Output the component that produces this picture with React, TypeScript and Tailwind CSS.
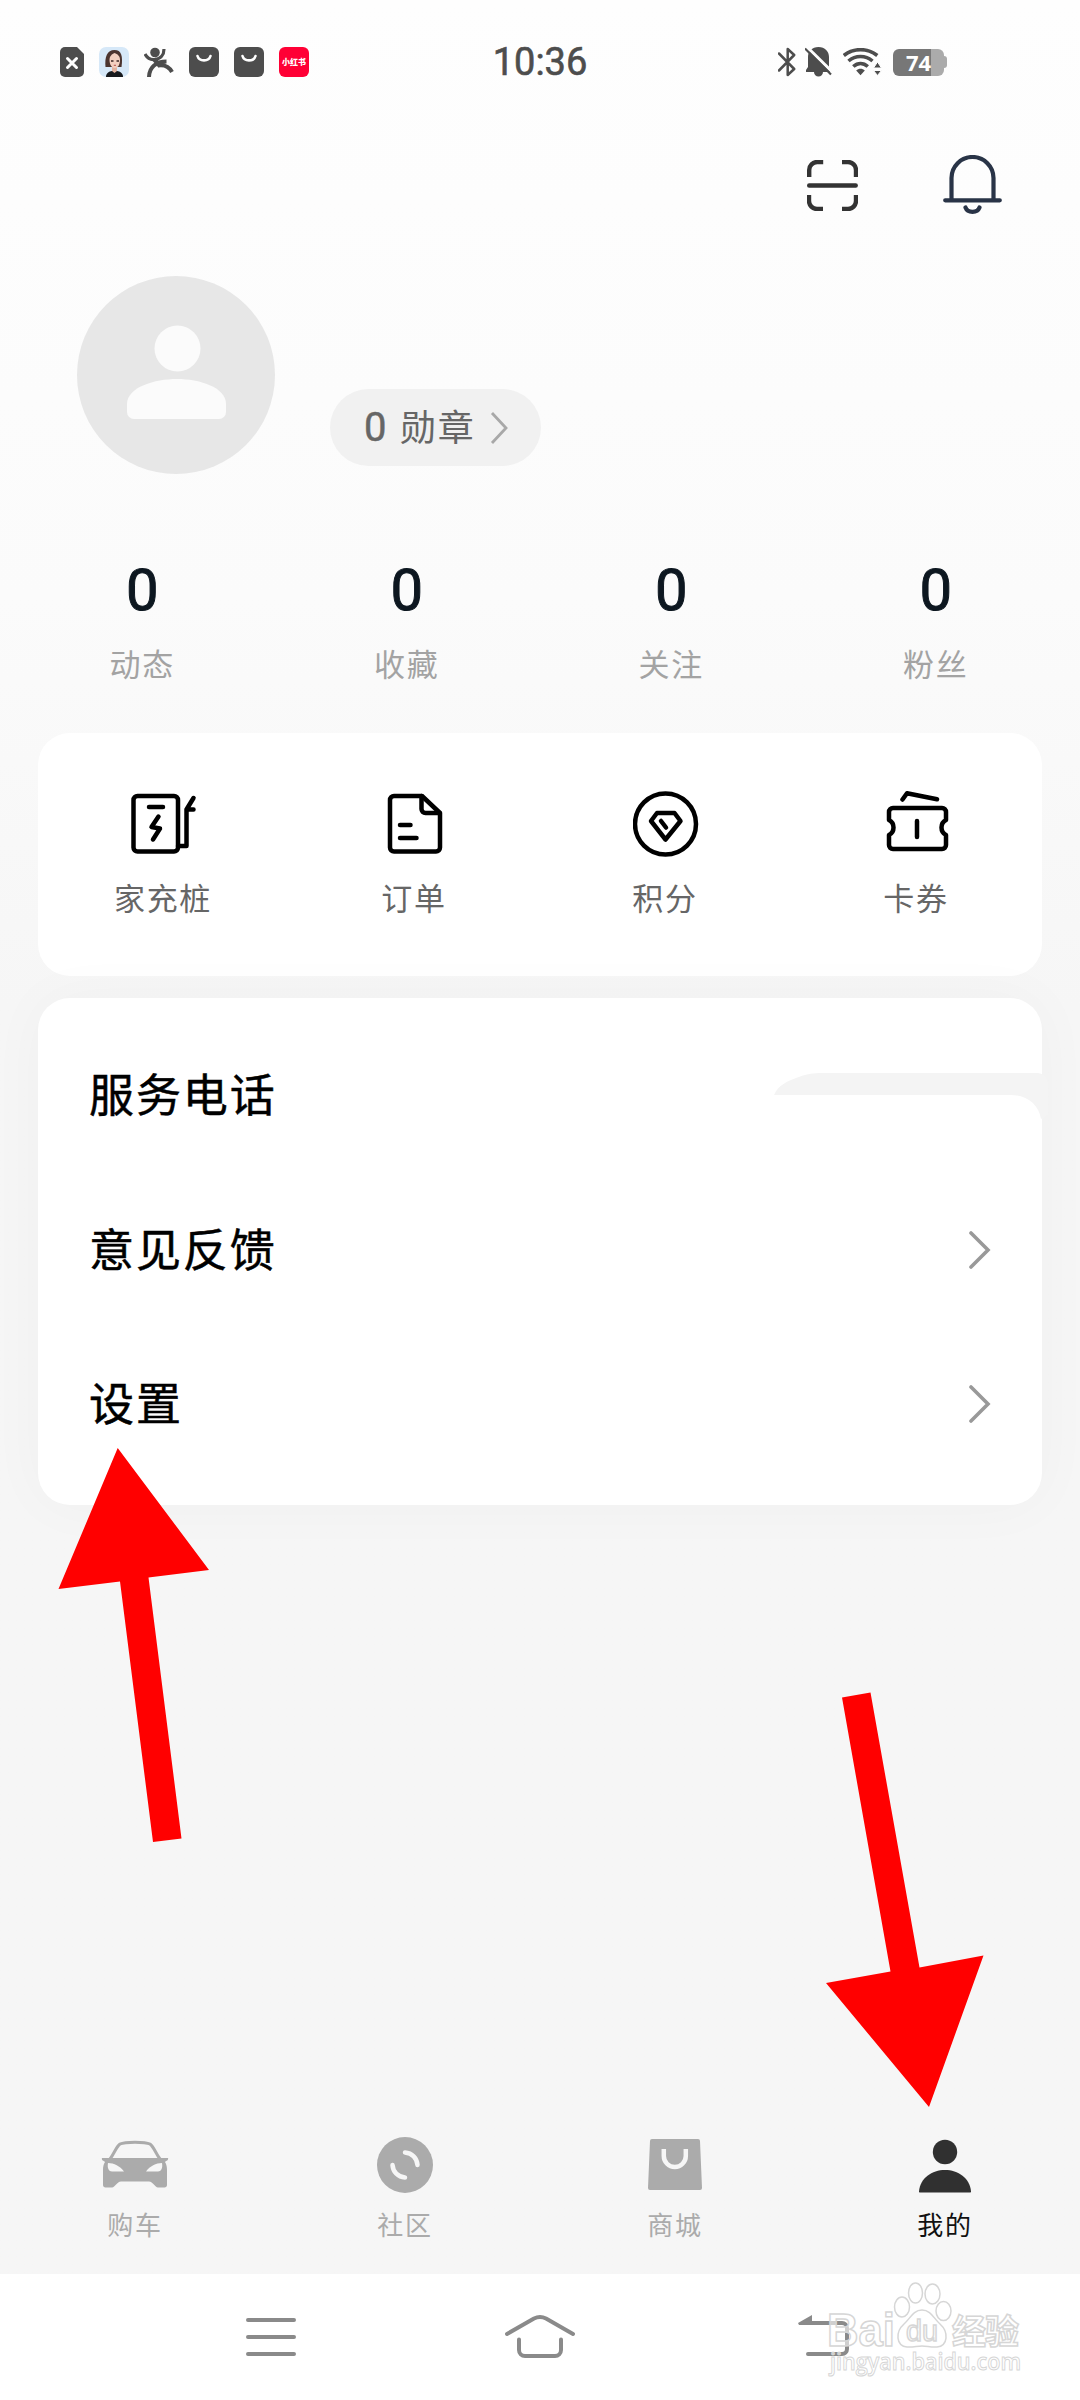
import type { ReactNode } from "react";

const stats = [
  { label: "动态", value: 0 },
  { label: "收藏", value: 0 },
  { label: "关注", value: 0 },
  { label: "粉丝", value: 0 },
];

const services = [
  { label: "家充桩", icon: <ChargerIcon /> },
  { label: "订单", icon: <OrderIcon /> },
  { label: "积分", icon: <PointsIcon /> },
  { label: "卡券", icon: <CouponIcon /> },
];

const menu = [
  { label: "服务电话", arrow: false },
  { label: "意见反馈", arrow: true },
  { label: "设置", arrow: true },
];

const tabs = [
  { label: "购车", icon: <CarIcon />, active: false },
  { label: "社区", icon: <CommunityIcon />, active: false },
  { label: "商城", icon: <MallIcon />, active: false },
  { label: "我的", icon: <MineIcon />, active: true },
];

/* Status bar icons */

function SimIcon() {
  return (
    <svg width="24" height="30" viewBox="0 0 24 30">
      <path d="M5 0h12l7 7v18a5 5 0 0 1-5 5H5a5 5 0 0 1-5-5V5a5 5 0 0 1 5-5z" fill="#4d4d4d" />
      <path d="M7.500 11.500l9 9M16.500 11.500l-9 9" stroke="#fff" strokeWidth="3" strokeLinecap="round" />
    </svg>
  );
}

function PortraitIcon() {
  return (
    <svg width="30" height="30" viewBox="0 0 30 30">
      <rect width="30" height="30" rx="7" fill="#d6e8f8" />
      <path d="M6.500 20C5.500 10 8 3 15.500 3c7 0 8.500 6 7 17z" fill="#4b342f" />
      <path d="M7 30c0-4 3-5.500 6-6h5c3 .5 6 2 6 6z" fill="#17191d" />
      <path d="M13 19h5v5l-2.500 2-2.500-2z" fill="#e2b3a0" />
      <path d="M10.500 13c0-4 2.500-6 5-7 3 1 5.500 3 5.500 7 0 5-2.500 8-5.200 8s-5.300-3-5.300-8z" fill="#f2cfc0" />
      <path d="M12 14h2.500M17.500 14H20" stroke="#3a2623" strokeWidth="1.500" />
      <path d="M14.800 18.300h2.200" stroke="#b5514b" strokeWidth="1" />
    </svg>
  );
}

function RunnerIcon() {
  return (
    <svg width="30" height="30" viewBox="0 0 30 30" fill="none" stroke="#4d4d4d" strokeWidth="4">
      <circle cx="11" cy="5.500" r="4.800" fill="#4d4d4d" stroke="none" />
      <path d="M1 7c2 4 6 6 10 5.500C16.500 12 20 8 20 2" strokeWidth="3.200" />
      <path d="M10 12l6 7" strokeWidth="4.500" />
      <path d="M22.500 14.500c-6 0-9 1-12.500 4-3 2.500-4.800 6-5 11.500M14 18.500c6-1 11 1 14 6.500" />
    </svg>
  );
}

function BagIcon() {
  return (
    <svg width="30" height="30" viewBox="0 0 30 30">
      <rect width="30" height="30" rx="6" fill="#4d4d4d" />
      <path d="M8.500 9a6.700 5.800 0 0 0 13 0" fill="none" stroke="#fff" strokeWidth="2.600" strokeLinecap="round" />
    </svg>
  );
}

function BluetoothIcon() {
  return (
    <svg width="18" height="30" viewBox="0 0 18 30" fill="none" stroke="#4d4d4d" strokeWidth="2.500">
      <path d="M1 6.500l15.200 15.500L9.700 28V2l6.500 6L1 23.500" strokeLinejoin="round" strokeLinecap="round" />
    </svg>
  );
}

function MuteIcon() {
  return (
    <svg width="27" height="30" viewBox="0 0 27 30">
      <path
        d="M13.500 0C20 0 24 4.500 24 10v10l2 5H18a4.500 4.500 0 0 1-9 0H1v-2l2-3V10C3 4.500 7 0 13.500 0z"
        fill="#4d4d4d"
      />
      <path d="M1.500 -.5l27 26.500" stroke="#fdfdfd" strokeWidth="3" />
      <path d="M0 1.500l26 26" stroke="#4d4d4d" strokeWidth="2.200" />
    </svg>
  );
}

function WifiIcon() {
  return (
    <svg width="39" height="28" viewBox="0 0 39 28" fill="none" stroke="#4d4d4d" strokeWidth="3.600">
      <path d="M.8 7.500c10-7.800 23.500-7.800 33.500 0M5.500 13c7-6 17-6 24 0M10.300 18.500c4.500-4 10-4 14.500 0" />
      <path d="M13.200 22.500c2.500-2.500 6.100-2.500 8.600 0l-4.300 4.800z" fill="#4d4d4d" stroke="none" />
      <path d="M34.500 14l4 6h-8zM34.500 27.500l4-5h-8z" fill="#4d4d4d" stroke="#fdfdfd" strokeWidth="1" />
    </svg>
  );
}

function Battery() {
  return (
    <div className="flex items-center">
      <div className="flex h-[27px] w-[51px] items-center justify-center rounded-[6px] bg-linear-to-r from-[#777777] from-75% to-[#ababab] to-75% font-['Open_Sans',sans-serif] text-[22px] leading-none font-bold text-white">
        74
      </div>
      <div className="h-3 w-[3px] rounded-r-[3px] bg-[#ababab]" />
    </div>
  );
}

/* Header icons */

function ScanIcon() {
  return (
    <svg width="51" height="51" viewBox="0 0 51 51" fill="none" stroke="#333" strokeWidth="4.400">
      <path d="M2.200 17v-7a8 8 0 0 1 8-8h6M35 2h6a8 8 0 0 1 8 8v7M49 35v6a8 8 0 0 1-8 8h-6M16 49h-6a8 8 0 0 1-8-8v-6" />
      <path d="M2.200 25.500h46.500" strokeLinecap="round" />
    </svg>
  );
}

function BellIcon() {
  return (
    <svg width="59" height="60" viewBox="0 0 59 60" fill="none" stroke="#293447" strokeWidth="4.200" strokeLinecap="round">
      <path d="M8.500 45V23a21 21 0 0 1 42 0v22M2.200 45.300h54.600M22.500 52.500a7.300 6 0 0 0 14 0" />
    </svg>
  );
}

/* Service icons */

function ServiceSvg({ children }: { children: ReactNode }) {
  return (
    <svg
      width="66"
      height="66"
      viewBox="0 0 66 66"
      fill="none"
      stroke="#000"
      strokeWidth="4.500"
      strokeLinecap="round"
      strokeLinejoin="round">
      {children}
    </svg>
  );
}

function ChargerIcon() {
  return (
    <ServiceSvg>
      <rect x="2.500" y="5" width="44.500" height="55.500" rx="4" />
      <path d="M18 16h14M27.500 25.500l-7 10.500 8.500 1.500-7 11M47 55h8.500V18.500l7-11.500M56.500 18.500h6" />
    </ServiceSvg>
  );
}

function OrderIcon() {
  return (
    <ServiceSvg>
      <path d="M12 5h28l18 17v34.500a4 4 0 0 1-4 4H12a4 4 0 0 1-4-4V9a4 4 0 0 1 4-4z" />
      <path d="M39.500 5v13a4 4 0 0 0 4 4h14M18 34h10.500M18 47h16.500" />
    </ServiceSvg>
  );
}

function PointsIcon() {
  return (
    <ServiceSvg>
      <circle cx="32.500" cy="33" r="30.500" />
      <path d="M24 22h17.500l6 8-15 18.500L18 30zM28 30l5 6.500" />
    </ServiceSvg>
  );
}

function CouponIcon() {
  return (
    <ServiceSvg>
      <path d="M9 17h49a4 4 0 0 1 4 4v8c-6 3-6 12 0 15v10a4 4 0 0 1-4 4H9a4 4 0 0 1-4-4V44c6-3 6-12 0-15v-8a4 4 0 0 1 4-4z" />
      <path d="M33 30v16M18.500 8.500l4.500-6.200 30 6" />
    </ServiceSvg>
  );
}

/* Tab icons */

function CarIcon() {
  return (
    <svg width="68" height="56" viewBox="0 0 68 56">
      <path d="M9 22c4-5 6-12 10-15 5-2.500 25-2.500 30 0 4 3 6 10 10 15" fill="none" stroke="#ababab" strokeWidth="3" />
      <path
        d="M1 21h66c1 2-2 3-3 4 1.500 2 2 5 2 8v15c0 1.500-1 2.500-2.500 2.500H57c-3 0-5-6-9-6H20c-4 0-6 6-9 6H4.500C3 50.500 2 49.500 2 48V33c0-3 .5-6 2-8-1-1-4-2-3-4z"
        fill="#ababab"
      />
      <path d="M7 26c6 0 12 3 16 8.500H11c-3 0-5-3-4-8.500zM61 26c-6 0-12 3-16 8.500h12c3 0 5-3 4-8.500z" fill="#f6f6f6" />
    </svg>
  );
}

function CommunityIcon() {
  return (
    <svg width="56" height="56" viewBox="0 0 56 56">
      <circle cx="28" cy="28" r="28" fill="#ababab" />
      <path
        d="M28 15.500c7 .5 12 5.500 12.500 12.500M28 40.500c-7-.5-12-5.500-12.500-12.500"
        fill="none"
        stroke="#f6f6f6"
        strokeWidth="4.500"
        strokeLinecap="round"
      />
    </svg>
  );
}

function MallIcon() {
  return (
    <svg width="54" height="56" viewBox="0 0 54 56">
      <path d="M4 2h46a2 2 0 0 1 2 2l2 47a2 2 0 0 1-2 2H2a2 2 0 0 1-2-2L2 4a2 2 0 0 1 2-2z" fill="#ababab" />
      <path d="M15.800 12v7a11 11 0 0 0 22 0v-7" fill="none" stroke="#f6f6f6" strokeWidth="4.500" />
    </svg>
  );
}

function MineIcon() {
  return (
    <svg width="52" height="56" viewBox="0 0 52 56" fill="#303030">
      <circle cx="26" cy="15" r="12.200" />
      <path d="M0 54.500C1 41 13 33 26 33s25 8 26 21.500c0 .6-.4 1-1 1H1c-.6 0-1-.4-1-1z" />
    </svg>
  );
}

function StatusBar() {
  return (
    <div className="grid h-[94px] grid-cols-[493px_94px_1fr] pt-[30px]">
      <div className="flex items-center gap-[15px] pl-[60px]">
        <SimIcon />
        <PortraitIcon />
        <RunnerIcon />
        <BagIcon />
        <BagIcon />
        <div className="flex size-[30px] items-center justify-center rounded-[6px] bg-[#ff0035] text-[8px] font-black whitespace-nowrap text-white">
          小红书
        </div>
      </div>
      <div className="flex items-center justify-center pt-px font-['Roboto',sans-serif] text-[38px] whitespace-nowrap text-[#4d4d4d] [-webkit-text-stroke:0.6px_#4d4d4d]">
        10:36
      </div>
      <div className="flex items-center pl-[191px]">
        <BluetoothIcon />
        <div className="ml-[9px]">
          <MuteIcon />
        </div>
        <div className="ml-[11px]">
          <WifiIcon />
        </div>
        <div className="ml-[11px]">
          <Battery />
        </div>
      </div>
    </div>
  );
}

function Profile() {
  return (
    <section className="mt-[61px] flex items-end gap-[55px] pl-[77px]">
      <div className="size-[198px] rounded-full bg-[#e7e7e7]">
        <svg width="198" height="198" viewBox="0 0 198 198" fill="#fbfbfb">
          <circle cx="100.500" cy="72.500" r="23" />
          <path d="M50 128c0-17 28-25 50-25s49 8 49 25v8a7 7 0 0 1-7 7H57a7 7 0 0 1-7-7z" />
        </svg>
      </div>
      <div className="mb-2 flex h-[77px] w-[211px] items-center rounded-full bg-[#f1f1f1] pl-[34px] text-[#666666]">
        <span className="w-[36px] font-['Roboto',sans-serif] text-[40px] leading-none [-webkit-text-stroke:0.5px_#666666]">
          0
        </span>
        <span className="pb-[5px] text-[36px] leading-none tracking-[1.7px]">勋章</span>
        <svg className="ml-[14px]" width="20" height="34" viewBox="0 0 20 34" fill="none">
          <path d="M3 2l14 15L3 32" stroke="#a8a8a8" strokeWidth="2.800" />
        </svg>
      </div>
    </section>
  );
}

function MenuCard() {
  return (
    <section className="relative mx-[38px] mt-[22px] h-[507px] rounded-[32px] bg-white pt-5 shadow-[0_0_60px_rgba(0,0,0,0.03)]">
      {menu.map(({ label, arrow }) => (
        <div key={label} className="flex h-[154.500px] items-center justify-between pr-[51px] pl-[51px]">
          <span className="pb-[5px] text-[45px] tracking-[1.9px] text-black [-webkit-text-stroke:0.5px_#000]">
            {label}
          </span>
          {arrow && (
            <svg width="22" height="38" viewBox="0 0 22 38" fill="none">
              <path d="M2 2l17 17L2 36" stroke="#999" strokeWidth="3.600" strokeLinecap="round" />
            </svg>
          )}
        </div>
      ))}
      {/* Grey band across the phone number */}
      <svg className="absolute top-[75px] left-[736px]" width="274" height="48" viewBox="0 0 274 48">
        <path d="M0 22C4 12 14 8 22 5 32 1 38 0 50 0h214c6 1 10 5 10 12v30l-7 4c-2-14-14-24-30-24z" fill="#f4f4f4" />
      </svg>
    </section>
  );
}

function TabBar() {
  return (
    <nav className="mt-auto grid h-[174px] grid-cols-4">
      {tabs.map(({ label, icon, active }) => (
        <div key={label} className="flex flex-col items-center pt-[37px]">
          {icon}
          <span
            className={`mt-4 text-[26px] leading-[30px] tracking-[1.7px] ${
              active ? "text-[#111111]" : "text-[#ababab]"
            }`}>
            {label}
          </span>
        </div>
      ))}
    </nav>
  );
}

function SystemNav() {
  return (
    <div className="flex h-[126px] bg-white pt-[40px] pl-[245px]">
      <svg width="52" height="46" viewBox="0 0 52 46" stroke="#8a8a8a" strokeWidth="4" strokeLinecap="round">
        <path d="M3 6h46M3 23h46M3 40h46" />
      </svg>
      <svg
        className="ml-[207px]"
        width="72"
        height="46"
        viewBox="0 0 72 46"
        fill="none"
        stroke="#8a8a8a"
        strokeWidth="4"
        strokeLinecap="round"
        strokeLinejoin="round">
        <path d="M3 20L30 4.500c4-2 8-2 12 0L69 20M15 25.500V36a6 6 0 0 0 6 6h30a6 6 0 0 0 6-6V25.500" />
      </svg>
      <svg className="ml-[222px]" width="52" height="46" viewBox="0 0 52 46" fill="none" stroke="#8a8a8a" strokeWidth="4">
        <path d="M10 9h34a5 5 0 0 1 5 5v21a5 5 0 0 1-5 5H10" strokeLinecap="round" />
        <path d="M0 9L14 1v10H1z" fill="#8a8a8a" stroke="none" />
      </svg>
    </div>
  );
}

function Watermark() {
  return (
    <svg className="absolute top-[2281px] left-[820px] overflow-visible" width="240" height="112" viewBox="0 0 240 112">
      <g fill="#fff" fillOpacity="0.600" stroke="#d6d6d6" strokeWidth="1.500" fontFamily="'Liberation Sans', sans-serif">
        <text x="7" y="65" fontSize="46" fontWeight="700" textLength="68" lengthAdjust="spacingAndGlyphs">
          Bai
        </text>
        <ellipse cx="82" cy="26" rx="7.500" ry="10" />
        <ellipse cx="95.500" cy="12" rx="7" ry="10" />
        <ellipse cx="112.500" cy="13" rx="7.500" ry="10" />
        <ellipse cx="123.500" cy="30" rx="7.500" ry="9.500" />
        <path d="M102 29c9 0 12 9 18 14 9 8 8 22-3 23-6 .5-10-1-15-1s-9 1.500-15 1c-11-1-12-15-3-23 6-5 9-14 18-14z" />
        <text x="86" y="60" fontSize="29" textLength="32" lengthAdjust="spacingAndGlyphs">
          du
        </text>
        <text x="132" y="63" fontSize="34" fontWeight="700" fontFamily="'Noto Sans CJK SC', sans-serif" textLength="67">
          经验
        </text>
        <text x="10" y="89" fontSize="24" strokeWidth="1" fontFamily="'Open Sans', sans-serif" fontWeight="600" textLength="191" lengthAdjust="spacingAndGlyphs">
          jingyan.baidu.com
        </text>
      </g>
    </svg>
  );
}

export default function App() {
  return (
    <div className="relative flex h-[2400px] w-[1080px] flex-col overflow-hidden bg-[#f6f6f6] bg-linear-to-b from-[#fefefe] via-[#fbfbfb] via-25% to-[#f6f6f6] to-42% font-['Noto_Sans_CJK_SC',sans-serif]">
      <StatusBar />

      <header className="mt-[61px] flex h-[60px] items-center justify-end gap-[85px] pr-[78px]">
        <ScanIcon />
        <BellIcon />
      </header>

      <Profile />

      <section className="mt-[86px] grid grid-cols-4 pr-[12px] pl-[10px]">
        {stats.map(({ label, value }) => (
          <div key={label} className="flex flex-col items-center">
            <span className="font-['Roboto',sans-serif] text-[58px] leading-[60px] text-[#0d1720] [-webkit-text-stroke:1px_#0d1720]">
              {value}
            </span>
            <span className="mt-[23px] text-[31px] leading-10 tracking-[1.7px] text-[#a3a3a3]">{label}</span>
          </div>
        ))}
      </section>

      <section className="mx-[38px] mt-[50px] grid h-[243px] grid-cols-4 rounded-[32px] bg-white pt-[58px]">
        {services.map(({ label, icon }) => (
          <div key={label} className="flex flex-col items-center">
            {icon}
            <span className="mt-5 mr-px text-[31px] leading-10 tracking-[1.7px] text-[#666666]">{label}</span>
          </div>
        ))}
      </section>

      <MenuCard />

      <TabBar />
      <SystemNav />

      {/* Pointers to the settings row and the profile tab */}
      <svg className="absolute inset-0" width="1080" height="2400" viewBox="0 0 1080 2400" fill="#ff0000">
        <path d="M117.700 1448L209 1570l-60.500 7.500 33 261-28.500 3.500-33-260.500-61.500 7.500z" />
        <path d="M842 1697.500l28.500-5 49 275 64-12L929 2107l-103-124 64.500-11.500z" />
      </svg>
      <Watermark />
    </div>
  );
}
